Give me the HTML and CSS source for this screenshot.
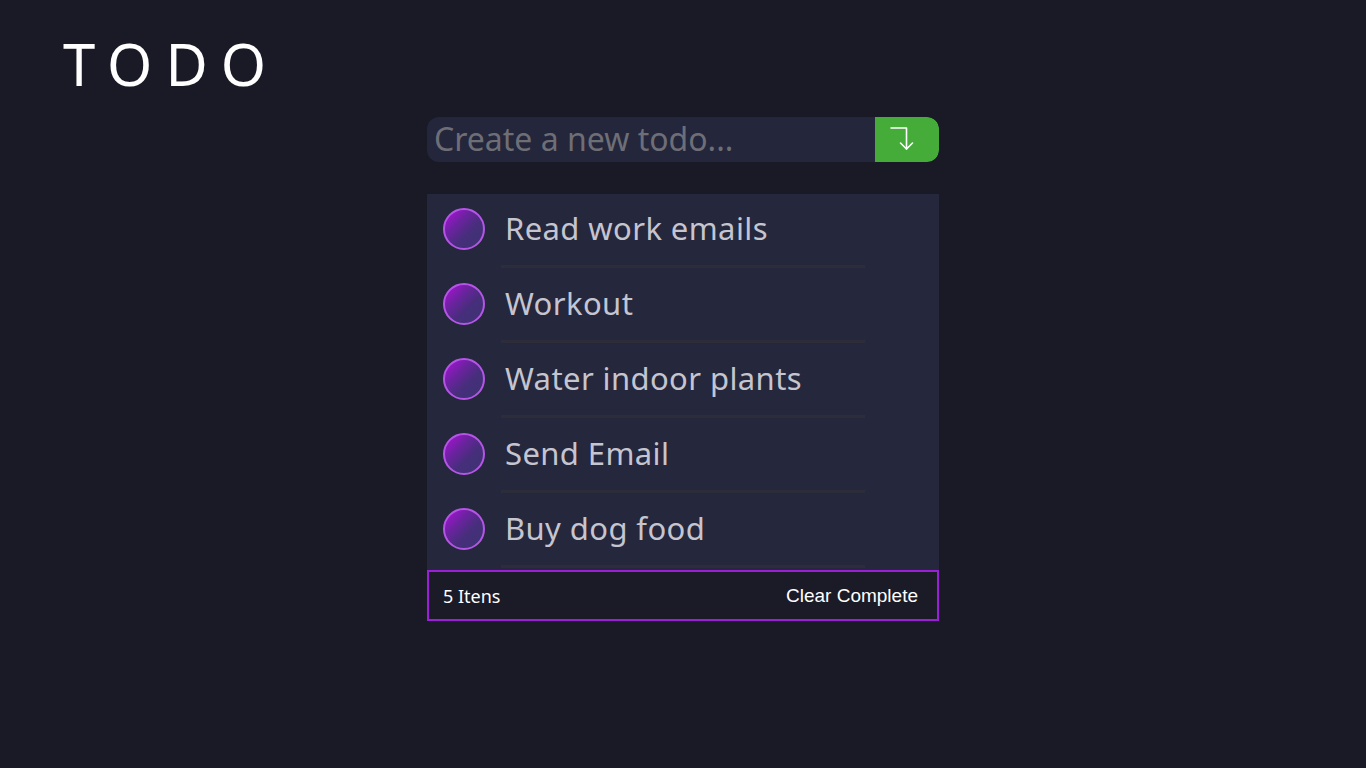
FILE: index.html
```html
<!DOCTYPE html>
<html lang="en">
<head>
<meta charset="utf-8">
<title>Todo</title>
<link rel="stylesheet" href="styles.css">
</head>
<body>
<header class="header">
  <h1 class="title">TODO</h1>
</header>
<main class="app">
  <form class="new-todo">
    <input class="new-input" type="text" placeholder="Create a new todo...">
    <button class="add-btn" type="button" aria-label="Add">
      <svg width="34" height="34" viewBox="0 0 34 34" fill="none" stroke="#fff" stroke-width="1.6" stroke-linecap="round" stroke-linejoin="round">
        <path d="M1 5 H16.5 V26"/>
        <path d="M10.5 20 L16.5 26 L22.5 20"/>
      </svg>
    </button>
  </form>
  <ul class="list">
    <li class="item"><span class="check"></span><span class="label">Read work emails</span></li>
    <li class="item"><span class="check"></span><span class="label">Workout</span></li>
    <li class="item"><span class="check"></span><span class="label">Water indoor plants</span></li>
    <li class="item"><span class="check"></span><span class="label">Send Email</span></li>
    <li class="item"><span class="check"></span><span class="label">Buy dog food</span></li>
  </ul>
  <footer class="footer">
    <span class="count">5 Itens</span>
    <button class="clear" type="button">Clear Complete</button>
  </footer>
</main>
</body>
</html>
```
FILE: styles.css
```css
* { box-sizing: border-box; }
html, body { margin: 0; padding: 0; }
body {
  background: #191a26;
  color: #fff;
  font-family: "Noto Sans", "DejaVu Sans", sans-serif;
  min-height: 768px;
}
.header {
  padding: 27px 0 0 63px;
  height: 117px;
}
.title {
  margin: 0;
  font-weight: 400;
  font-size: 58px;
  line-height: 74px;
  letter-spacing: 13px;
  color: #fff;
}
.app {
  width: 512px;
  margin: 0 auto;
}
.new-todo {
  display: flex;
  height: 45px;
  border-radius: 12px;
  overflow: hidden;
  background: #24263b;
  margin: 0;
}
.new-input {
  flex: 1;
  min-width: 0;
  border: 0;
  outline: 0;
  background: transparent;
  padding: 0 0 3px 7px;
  font-family: inherit;
  font-size: 32px;
  color: #c8c8d2;
}
.new-input::placeholder { color: #6e6e77; }
.add-btn {
  width: 64px;
  border: 0;
  padding: 0;
  background: #45ac3a;
  display: flex;
  align-items: center;
  justify-content: center;
  border-radius: 0 12px 12px 0;
}
.list {
  list-style: none;
  margin: 32px 0 0;
  padding: 0 0 1px;
  background: #25273d;
}
.item {
  display: flex;
  align-items: center;
  height: 75px;
  padding: 0 0 5px 16px;
  position: relative;
}
.item::after {
  content: "";
  position: absolute;
  left: 74px;
  width: 364px;
  bottom: 1px;
  height: 3px;
  background: #2c2c3b;
}
.check {
  width: 42px;
  height: 42px;
  border-radius: 50%;
  border: 2.5px solid #b555e6;
  background: linear-gradient(135deg, #b00fdb 0%, #6a239e 35%, #472e7c 60%, #3b3470 100%);
  flex: none;
}
.label {
  margin-left: 20px;
  font-size: 31px;
  color: #c5c5d0;
  letter-spacing: 0.4px;
  padding-bottom: 2px;
}
.footer {
  display: flex;
  align-items: center;
  justify-content: space-between;
  height: 51px;
  border: 2px solid #9c1fd8;
  background: #1a1b27;
  padding: 0 19px 0 14px;
}
.count {
  font-size: 18px;
  color: #fff;
}
.clear {
  background: transparent;
  border: 0;
  padding: 0;
  color: #fff;
  font-family: "Liberation Sans", Arial, sans-serif;
  font-size: 19px;
}
```
